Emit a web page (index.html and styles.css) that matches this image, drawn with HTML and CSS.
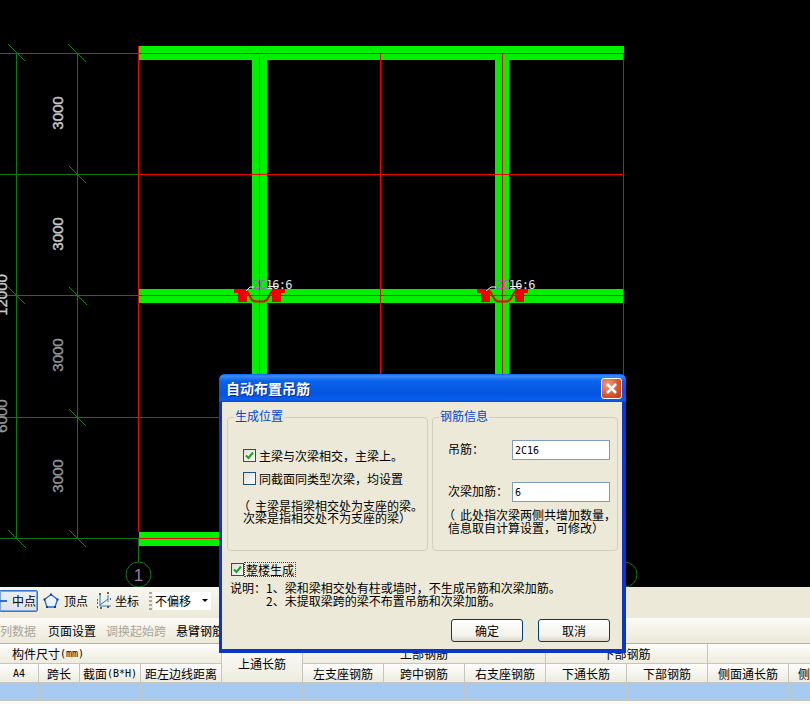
FILE: index.html
```html
<!DOCTYPE html>
<html lang="zh-CN">
<head>
<meta charset="utf-8">
<title>自动布置吊筋</title>
<link rel="stylesheet" href="styles.css">
</head>
<body>
<div class="app">
  <svg class="canvas" width="810" height="587" viewBox="0 0 810 587">
    <g class="beam">
      <rect x="252" y="60" width="15" height="485"/>
      <rect x="495" y="60" width="14" height="485"/>
      <rect x="138" y="46" width="486" height="7"/>
      <rect x="139" y="53" width="484" height="7"/>
      <rect x="139" y="289" width="484" height="14"/>
      <rect x="139" y="532" width="484" height="14"/>
    </g>
    <g class="dim">
      <path d="M0 53.5H138M0 174.5H138M0 295.5H138M0 417.5H138M0 538.5H138M16.5 53V538M77.5 53V538M138.5 538V562"/>
    </g>
    <g class="tick">
      <path d="M8 44L25 61M68 44L86 62M69 166L86 183M8 287L25 304M69 287L87 305M69 409L86 426M8 530L26 548M69 530L86 547"/>
    </g>
    <g class="axis">
      <circle cx="138.5" cy="574.5" r="12.5"/>
      <circle cx="624.5" cy="574.5" r="12.5"/>
    </g>
    <text class="axis-no" x="138.5" y="581" text-anchor="middle">1</text>
    <g class="dim-text">
      <text transform="translate(63 113) rotate(-90)" text-anchor="middle">3000</text>
      <text transform="translate(63 234) rotate(-90)" text-anchor="middle">3000</text>
      <text class="dense" transform="translate(63 355) rotate(-90)" text-anchor="middle">3000</text>
      <text class="dense" transform="translate(63 476) rotate(-90)" text-anchor="middle">3000</text>
      <text transform="translate(7 295) rotate(-90)" text-anchor="middle">12000</text>
      <text class="dense" transform="translate(7 416) rotate(-90)" text-anchor="middle">6000</text>
    </g>
    <g class="axisline">
      <path d="M138.5 46V532M380.5 53V545M502.5 53V545M259.5 53V545M623.5 53V545M139 53.5H623M139 174.5H623M139 295.5H623M139 417.5H623M139 538.5H623"/>
    </g>
    <g class="hanger">
      <path class="fill" d="M234 289H247V302H238V293H234ZM285 289H272V302H281V293H285Z"/>
      <path class="line" d="M247 291L252 300L255 301.500H264L267 300L272 291"/>
      <path class="fill" transform="translate(243 0)" d="M234 289H247V302H238V293H234ZM285 289H272V302H281V293H285Z"/>
      <path class="line" transform="translate(243 0)" d="M247 291L252 300L255 301.500H264L267 300L272 291"/>
    </g>
    <path class="leader" d="M246 291L250 287H254M268 286.500H278"/>
    <path class="leader" d="M486 291L491 287H496M510 286.500H521"/>
    <text class="rebar" x="253" y="289"><tspan class="rebar-c">2C</tspan>16:6</text>
    <text class="rebar" x="496" y="289"><tspan class="rebar-c">2C</tspan>16:6</text>
  </svg>

  <div class="toolbar">
    <div class="tool-band">
      <div class="tool tool-on">
        <svg class="ico-arrow" width="8" height="4" viewBox="0 0 8 4"><path d="M0 2H7"/></svg>
        <span>中点</span>
      </div>
      <div class="tool tool-vertex">
        <svg width="16" height="16" viewBox="0 0 16 16" class="ico-pent"><path class="pent" d="M8 1.500L14.500 6.500L12 14H4L1.500 6.500Z"/><path class="pent-dots" d="M7 1.500h2M13.500 6.500h2M11 14h2M3 14h2M.5 6.500h2"/></svg>
        <span>顶点</span>
      </div>
      <div class="tool tool-coord">
        <svg width="18" height="18" viewBox="0 0 18 18" class="ico-coord"><path class="blue" d="M5 3V14H16M5 13L13 7M13 3V10"/><path class="dots" d="M2 8h1M2 11h1M2 15h1M4 2h2M12 1h2M5 16h2M12 15h2M15 7h1"/></svg>
        <span>坐标</span>
      </div>
      <i class="grip"></i>
      <div class="combo"><span>不偏移</span><i class="caret"></i></div>
      <i class="grip"></i>
    </div>
  </div>

  <div class="menu-row">
    <span class="cmd off first">列数据</span>
    <span class="cmd">页面设置</span>
    <span class="cmd off">调换起始跨</span>
    <span class="cmd">悬臂钢筋代号</span>
  </div>

  <div class="grid">
    <div class="th th-group">构件尺寸<span class="lat">(mm)</span></div>
    <div class="th th-top">上通长筋</div>
    <div class="th th-upper">上部钢筋</div>
    <div class="th th-lower">下部钢筋</div>
    <div class="th th-rest"></div>
    <div class="th"><span class="lat">A4</span></div>
    <div class="th">跨长</div>
    <div class="th">截面<span class="lat">(B*H)</span></div>
    <div class="th">距左边线距离</div>
    <div class="th">左支座钢筋</div>
    <div class="th">跨中钢筋</div>
    <div class="th">右支座钢筋</div>
    <div class="th">下通长筋</div>
    <div class="th">下部钢筋</div>
    <div class="th">侧面通长筋</div>
    <div class="th th-last">侧面原位钢筋</div>
    <div class="td"></div><div class="td"></div><div class="td"></div><div class="td"></div>
    <div class="td"></div><div class="td"></div><div class="td"></div><div class="td"></div>
    <div class="td"></div><div class="td"></div><div class="td"></div><div class="td"></div>
  </div>

  <div class="dialog">
    <div class="titlebar">
      <span class="title">自动布置吊筋</span>
      <div class="close">
        <svg width="13" height="13" viewBox="0 0 13 13"><path d="M2 2L11 11M11 2L2 11"/></svg>
      </div>
    </div>
    <div class="body">
      <div class="groups">
        <div class="group group-pos">
          <span class="legend">生成位置</span>
          <label class="check">
            <span class="box"><svg width="11" height="11" viewBox="0 0 11 11"><path d="M2 5.500L4.500 8L9 2.500"/></svg></span>
            <span>主梁与次梁相交，主梁上。</span>
          </label>
          <label class="check">
            <span class="box"></span>
            <span>同截面同类型次梁，均设置</span>
          </label>
          <p class="note"><span class="paren">（</span>主梁是指梁相交处为支座的梁。<br>次梁是指相交处不为支座的梁）</p>
        </div>
        <div class="group group-info">
          <span class="legend">钢筋信息</span>
          <div class="field">
            <span class="field-label">吊筋：</span>
            <span class="input"><span class="lat">2C16</span></span>
          </div>
          <div class="field">
            <span class="field-label">次梁加筋：</span>
            <span class="input"><span class="lat">6</span></span>
          </div>
          <p class="note note-info"><span class="paren">（</span>此处指次梁两侧共增加数量，<br>信息取自计算设置，可修改）</p>
        </div>
      </div>
      <label class="check check-all">
        <span class="box"><svg width="11" height="11" viewBox="0 0 11 11"><path d="M2 5.500L4.500 8L9 2.500"/></svg></span>
        <span class="focus">整楼生成</span>
      </label>
      <div class="desc">
        <div class="desc-row"><span class="desc-key">说明：</span><span>1、梁和梁相交处有柱或墙时，不生成吊筋和次梁加筋。</span></div>
        <div class="desc-row"><span class="desc-key"></span><span>2、未提取梁跨的梁不布置吊筋和次梁加筋。</span></div>
      </div>
      <div class="actions">
        <div class="btn">确定</div>
        <div class="btn">取消</div>
      </div>
    </div>
  </div>
</div>
</body>
</html>
```
FILE: styles.css
```css
* { box-sizing: border-box; }
html, body { margin: 0; padding: 0; background: #000; }
.app {
  position: relative;
  width: 810px;
  height: 704px;
  overflow: hidden;
  background: #fbfaf5;
  font-family: "Noto Sans CJK SC", "Liberation Sans", sans-serif;
  font-size: 12px;
  line-height: 13px;
  color: #000;
}
.lat { font-family: "DejaVu Sans Mono", monospace; font-size: 10px; }

/* drawing */
.canvas { display: block; background: #000; }
.beam { fill: #00f000; }
.dim path, .tick path, .axis circle { fill: none; stroke: #0f7a0f; stroke-width: 1; }
.dim path, .axisline path { shape-rendering: crispEdges; }
.axisline path { fill: none; stroke: #f00000; stroke-width: 1; }
.hanger .fill { fill: #f00000; shape-rendering: crispEdges; }
.hanger .line { fill: none; stroke: #f00000; stroke-width: 2; }
.leader { fill: none; stroke: #fff; stroke-width: 1; }
.rebar { font-family: "DejaVu Sans Mono", monospace; font-size: 12px; letter-spacing: -0.800px; fill: #e4e4e4; }
.rebar-c { fill: #c050d8; }
.dim-text text { font-family: "Liberation Sans", sans-serif; font-size: 15px; fill: #c8c8c8; stroke: #c8c8c8; stroke-width: 0.400px; }
.dim-text .dense { fill: #8c8c8c; stroke: #b0b0b0; stroke-width: 0.300px; }
.axis-no { font-family: "Liberation Sans", sans-serif; font-size: 17px; fill: #9a7f9a; }

/* toolbars */
.toolbar { height: 31px; background: #ece9d8; display: flex; }
.tool-band {
  width: 300px;
  display: flex;
  align-items: center;
  background: linear-gradient(#f7f6ef, #ece9d8);
}
.tool { display: flex; align-items: center; height: 22px; font-size: 12px; }
.tool-on {
  width: 39px;
  margin-left: -1px;
  margin-top: -4px;
  border: 1px solid #3a78d0;
  box-shadow: inset 0 0 0 1px #7ba4e0;
  border-radius: 2px;
  background: linear-gradient(#e9edf4, #dfe3ea);
  gap: 4px;
  padding-left: 0;
}
.tool-vertex { margin-left: 5px; margin-top: -4px; gap: 5px; }
.tool-coord { margin-left: 7px; margin-top: -4px; gap: 2px; }
.ico-arrow path { stroke: #2f6fc8; stroke-width: 2; fill: none; }
.pent { fill: #eef3fb; stroke: #2a66c8; stroke-width: 1.300px; }
.pent-dots { fill: none; stroke: #12408e; stroke-width: 2; }
.ico-coord .blue { fill: none; stroke: #2a7ad0; stroke-width: 1; }
.ico-coord .dots { fill: none; stroke: #333; stroke-width: 1.500px; }
.grip {
  width: 3px;
  height: 18px;
  margin: -4px 1px 0 10px;
  background: repeating-linear-gradient(#a8a898 0 2px, transparent 2px 4px);
}
.combo {
  width: 58px;
  height: 18px;
  margin-top: -4px;
  background: #fff;
  display: flex;
  align-items: center;
  justify-content: space-between;
  padding: 0 3px 0 2px;
}
.caret {
  width: 0;
  height: 0;
  border: 3px solid transparent;
  border-top: 3px solid #000;
  border-bottom: 0;
}
.menu-row {
  height: 26px;
  display: flex;
  align-items: center;
  gap: 10px;
  background: linear-gradient(#fbfaf6, #ece9d8);
  border-bottom: 1px solid #a9b2bf;
  white-space: nowrap;
}
.cmd.off { color: #a8a69c; }
.cmd.first { width: 38px; }

/* grid */
.grid {
  display: grid;
  grid-template-columns: 39px 41px 61px 81px repeat(8, 81px);
  grid-template-rows: 20px 19px 18px;
  white-space: nowrap;
}
.th {
  display: flex;
  align-items: center;
  justify-content: center;
  overflow: hidden;
  border-right: 1px solid #c4c4c0;
  border-bottom: 1px solid #c4c4c0;
  background: linear-gradient(#fdfdfb, #eeecdf);
}
.th-group { grid-column: 1 / 5; justify-content: flex-start; padding-left: 12px; }
.th-top { grid-column: 5; grid-row: 1 / 3; }
.th-upper { grid-column: 6 / 9; }
.th-lower { grid-column: 9 / 11; }
.th-rest { grid-column: 11 / 13; }
.th-last { justify-content: flex-start; padding-left: 9px; }
.td { border-right: 1px solid #c4c4c0; border-bottom: 1px solid #c4c4c0; background: #a6caf0; }

/* dialog */
.dialog {
  position: absolute;
  left: 219px;
  top: 374px;
  width: 407px;
  height: 279px;
  display: flex;
  flex-direction: column;
  border-radius: 6px 6px 0 0;
  background: #0b36c8;
}
.titlebar {
  height: 28px;
  flex: none;
  display: flex;
  align-items: center;
  justify-content: space-between;
  padding: 0 4px 0 7px;
  border-radius: 6px 6px 0 0;
  background: linear-gradient(#0a62f0 0, #3a8cf4 2px, #0a62ea 7px, #0454e0 20px, #0a5ef0 26px, #0848c8 28px);
}
.title {
  color: #fff;
  font-size: 14px;
  font-weight: 700;
  text-shadow: 1px 1px 0 #0a2a90;
}
.close {
  width: 21px;
  height: 21px;
  display: flex;
  align-items: center;
  justify-content: center;
  border: 1px solid #fff;
  border-radius: 3px;
  background: radial-gradient(circle at 30% 30%, #f0a080, #d8502c 60%, #c03a18);
}
.close path { fill: none; stroke: #fff; stroke-width: 2.500px; }
.body {
  flex: 1;
  margin: 0 4px 4px 3px;
  background: #ece9d8;
  display: flex;
  flex-direction: column;
}
.groups { display: flex; gap: 4px; padding: 15px 0 0 5px; }
.group {
  position: relative;
  height: 134px;
  border: 1px solid #d0d0bf;
  border-radius: 4px;
}
.group-pos { width: 201px; padding: 31px 0 0 15px; }
.group-info { width: 186px; padding: 22px 0 0 15px; }
.legend {
  position: absolute;
  left: 6px;
  top: -9px;
  padding: 0 1px;
  background: #ece9d8;
  color: #0046d5;
  white-space: nowrap;
}
.check { display: flex; align-items: center; gap: 3px; height: 13px; white-space: nowrap; }
.check + .check { margin-top: 10px; }
.box {
  flex: none;
  width: 13px;
  height: 13px;
  display: flex;
  align-items: center;
  justify-content: center;
  border: 1px solid #1c5180;
  background: linear-gradient(135deg, #dcdcd7, #fff);
}
.box path { fill: none; stroke: #21a121; stroke-width: 2; }
.note { margin: 15px 0 0; line-height: 12px; white-space: nowrap; }
.note-info { margin-top: 6px; line-height: 13px; }
.paren { display: inline-block; margin: 0 5px 0 -5px; }
.field { display: flex; align-items: center; height: 20px; }
.field + .field { margin-top: 22px; }
.field-label { width: 64px; flex: none; white-space: nowrap; padding-bottom: 3px; }
.input {
  width: 98px;
  height: 20px;
  padding-left: 2px;
  display: flex;
  align-items: center;
  border: 1px solid #7f9db9;
  background: #fff;
}
.check-all { margin: 12px 0 0 9px; gap: 1px; }
.focus { outline: 1px dotted #444; outline-offset: 0; padding: 0 1px; }
.desc { margin: 5px 0 0 8px; }
.desc-row { display: flex; white-space: nowrap; }
.desc-key { width: 36px; flex: none; }
.actions { display: flex; justify-content: flex-end; gap: 15px; margin-top: 12px; padding-right: 12px; }
.btn {
  width: 72px;
  height: 23px;
  display: flex;
  align-items: center;
  justify-content: center;
  border: 1px solid #003c74;
  border-radius: 3px;
  background: linear-gradient(#fff, #f4f3ee 70%, #dcd8c8);
}
```
